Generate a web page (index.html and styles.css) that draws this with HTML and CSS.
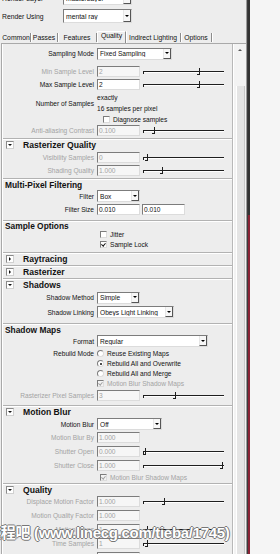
FILE: index.html
```html
<!DOCTYPE html>
<html>
<head>
<meta charset="UTF-8">
<link rel="stylesheet" href="styles.css">
</head>
<body>
<div class="window">
  <div class="panel">
    <div class="top">
      <div class="top-row">
        <span class="top-label">Render Layer</span>
        <div class="drop big" style="width:67px"><span>masterLayer</span><b></b></div>
      </div>
      <div class="top-row">
        <span class="top-label">Render Using</span>
        <div class="drop big" style="width:67px"><span>mental ray</span><b></b></div>
      </div>
    </div>

    <div class="tabs">
      <span class="tab" style="width:28px">Common</span>
      <span class="tab" style="width:26px">Passes</span>
      <span class="tab" style="width:38px">Features</span>
      <span class="tab on" style="width:27px">Quality</span>
      <span class="tab" style="width:54px">Indirect Lighting</span>
      <span class="tab" style="width:30px">Options</span>
    </div>

    <div class="frame">
      <div class="content">

        <!-- sampling (header scrolled away) -->
        <div class="sec first">
          <div class="row">
            <span class="lbl">Sampling Mode</span>
            <div class="drop" style="width:73px"><span>Fixed Sampling</span><b></b></div>
          </div>
          <div class="row gap5">
            <span class="lbl dis">Min Sample Level</span>
            <span class="field dis">2</span>
            <div class="slider"><i style="left:54px"></i></div>
          </div>
          <div class="row">
            <span class="lbl">Max Sample Level</span>
            <span class="field">2</span>
            <div class="slider"><i style="left:54px"></i></div>
          </div>
          <div class="multi">
            <span class="lbl">Number of Samples</span>
            <div class="lines">
              <div class="line">exactly</div>
              <div class="line">16 samples per pixel</div>
            </div>
          </div>
          <div class="opt diag"><span class="cb"></span>Diagnose samples</div>
          <div class="row">
            <span class="lbl dis">Anti-aliasing Contrast</span>
            <span class="field dis">0.100</span>
            <div class="slider"><i style="left:9px"></i></div>
          </div>
        </div>

        <div class="sec">
          <div class="hd"><span class="tog open"></span>Rasterizer Quality</div>
          <div class="row">
            <span class="lbl dis">Visibility Samples</span>
            <span class="field dis">0</span>
            <div class="slider"><i style="left:2px"></i></div>
          </div>
          <div class="row">
            <span class="lbl dis">Shading Quality</span>
            <span class="field dis">1.000</span>
            <div class="slider"><i style="left:17px"></i></div>
          </div>

          <div class="subsec">
            <div class="sub">Multi-Pixel Filtering</div>
            <div class="row">
              <span class="lbl">Filter</span>
              <div class="drop" style="width:41px"><span>Box</span><b></b></div>
            </div>
            <div class="row h14">
              <span class="lbl">Filter Size</span>
              <span class="field">0.010</span>
              <span class="field second">0.010</span>
            </div>
          </div>

          <div class="subsec">
            <div class="sub short">Sample Options</div>
            <div class="opt"><span class="cb"></span>Jitter</div>
            <div class="opt"><span class="cb on"></span>Sample Lock</div>
          </div>
        </div>

        <div class="sec"><div class="hd"><span class="tog"></span>Raytracing</div></div>
        <div class="sec"><div class="hd"><span class="tog"></span>Rasterizer</div></div>

        <div class="sec">
          <div class="hd"><span class="tog open"></span>Shadows</div>
          <div class="row h14">
            <span class="lbl">Shadow Method</span>
            <div class="drop" style="width:41px"><span>Simple</span><b></b></div>
          </div>
          <div class="row h15">
            <span class="lbl">Shadow Linking</span>
            <div class="drop" style="width:75px"><span>Obeys Light Linking</span><b></b></div>
          </div>

          <div class="subsec maps">
            <div class="sub">Shadow Maps</div>
            <div class="row">
              <span class="lbl">Format</span>
              <div class="drop" style="width:109px"><span>Regular</span><b></b></div>
            </div>
            <div class="radios">
              <span class="lbl">Rebuild Mode</span>
              <div class="lines">
                <div class="opt"><span class="rb"></span>Reuse Existing Maps</div>
                <div class="opt"><span class="rb on"></span>Rebuild All and Overwrite</div>
                <div class="opt"><span class="rb"></span>Rebuild All and Merge</div>
                <div class="opt dis"><span class="cb on off"></span>Motion Blur Shadow Maps</div>
              </div>
            </div>
            <div class="row">
              <span class="lbl dis">Rasterizer Pixel Samples</span>
              <span class="field dis">3</span>
              <div class="slider"><i style="left:30px"></i></div>
            </div>
          </div>
        </div>

        <div class="sec">
          <div class="hd"><span class="tog open"></span>Motion Blur</div>
          <div class="row">
            <span class="lbl">Motion Blur</span>
            <div class="drop" style="width:63px"><span>Off</span><b></b></div>
          </div>
          <div class="row h14">
            <span class="lbl dis">Motion Blur By</span>
            <span class="field dis">1.000</span>
          </div>
          <div class="row h14">
            <span class="lbl dis">Shutter Open</span>
            <span class="field dis">0.000</span>
            <div class="slider"><i style="left:0"></i></div>
          </div>
          <div class="row h14">
            <span class="lbl dis">Shutter Close</span>
            <span class="field dis">1.000</span>
            <div class="slider"><i style="left:77px"></i></div>
          </div>
          <div class="opt indent dis"><span class="cb on off"></span>Motion Blur Shadow Maps</div>

          <div class="subsec">
            <div class="hd small"><span class="tog open"></span>Quality</div>
            <div class="row">
              <span class="lbl dis">Displace Motion Factor</span>
              <span class="field dis">1.000</span>
              <div class="slider"><i style="left:19px"></i></div>
            </div>
            <div class="row h15">
              <span class="lbl dis">Motion Quality Factor</span>
              <span class="field dis">1.000</span>
            </div>
            <div class="row h14">
              <span class="lbl dis">Motion Steps</span>
              <span class="field dis">1</span>
              <div class="slider"><i style="left:2px"></i></div>
            </div>
            <div class="row h14">
              <span class="lbl dis">Time Samples</span>
              <span class="field dis">1</span>
              <div class="slider"><i style="left:2px"></i></div>
            </div>
            <div class="row h14">
              <span class="lbl dis">Time Contrast</span>
              <span class="field dis">0.200</span>
            </div>
          </div>
        </div>

      </div>
      <div class="scroll">
        <div class="arrow-up"></div>
        <div class="thumb"></div>
      </div>
    </div>
  </div>
  <div class="edge">
    <span class="e1"></span><span class="e2"></span><span class="e3"></span>
  </div>
  <div class="outside"></div>

  <div class="mark">教程吧 (www.linecg.com/tieba/1745)</div>
</div>
</body>
</html>
```

FILE: styles.css
```css
body {
    margin: 0;
    font-family: "Liberation Sans", Arial, sans-serif;
    font-size: 6.6px;
    color: #111;
    background: #f5f5f5;
}

.window {
    position: relative;
    display: flex;
    width: 280px;
    height: 554px;
    overflow: hidden;
}

.panel {
    width: 246px;
    flex: none;
    background: #ededed;
}

/* top: layer + renderer */
.top {
    display: flex;
    flex-direction: column;
    gap: 4px;
    margin-top: -9px;
    padding-left: 2px;
}
.top-row {
    display: flex;
    align-items: center;
    height: 14px;
    font-size: 6.8px;
}
.top-label {
    width: 61px;
}
.drop.big {
    height: 12px;
}

/* tabs */
.tabs {
    display: flex;
    height: 12px;
    margin-top: 8px;
    padding-left: 2px;
    font-size: 6.8px;
}
.tab {
    display: flex;
    align-items: center;
    justify-content: center;
    border-right: 1px solid #8c8c8c;
    box-shadow: 1px 0 0 #fff;
    margin-top: 2px;
    height: 9px;
}
.tab.on {
    margin-top: 0;
    height: 11px;
    border-left: 1px solid #fff;
    border-top: 1px solid #fff;
    align-items: flex-start;
}

/* frame */
.frame {
    display: flex;
    height: 511px;
    margin-left: 1px;
    border-top: 1px solid #a9a9a9;
    border-left: 1px solid #a9a9a9;
}
.content {
    width: 229px;
    flex: none;
    border-left: 1px solid #fff;
    border-right: 1px solid #b8b8b8;
}
.scroll {
    width: 13px;
    background: #f3f3f3;
    border-left: 1px solid #fff;
}
.arrow-up {
    height: 12px;
    position: relative;
}
.arrow-up::after {
    content: "";
    position: absolute;
    left: 4px;
    top: 5px;
    border-left: 2px solid transparent;
    border-right: 2px solid transparent;
    border-bottom: 2px solid #555;
}
.thumb {
    margin: 30px 1px 0 2px;
    height: 470px;
    background: #e4e4e4;
    border-left: 1px solid #fff;
    border-right: 1px solid #c8c8c8;
}

/* sections */
.sec {
    border-top: 1px solid #b2b2b2;
}
.sec.first {
    border-top: 0;
    padding-top: 3px;
    padding-bottom: 0.5px;
}
.hd {
    display: flex;
    align-items: center;
    height: 11px;
    border-top: 1px solid #fff;
    font-weight: bold;
    font-size: 8.6px;
}
.hd.small {
    height: 10px;
}
.tog {
    position: relative;
    width: 6px;
    height: 6px;
    margin: 0 9px 0 3px;
    background: #fff;
    border: 1px solid;
    border-color: #8a8a8a #d0d0d0 #d0d0d0 #8a8a8a;
}
.tog::after {
    content: "";
    position: absolute;
    left: 2px;
    top: 1px;
    border-top: 2px solid transparent;
    border-bottom: 2px solid transparent;
    border-left: 2px solid #111;
}
.tog.open::after {
    left: 1px;
    top: 2px;
    border-left: 2px solid transparent;
    border-right: 2px solid transparent;
    border-top: 2px solid #111;
    border-bottom: 0;
}
.subsec {
    margin-top: 1px;
    padding-bottom: 2px;
    border-top: 1px solid #b2b2b2;
}
.subsec.maps {
    margin-top: 3px;
    padding-bottom: 3px;
}
.sub {
    height: 10px;
    line-height: 10px;
    padding-left: 2px;
    border-top: 1px solid #fff;
    font-weight: bold;
    font-size: 8.4px;
}
.sub.short {
    height: 8px;
    line-height: 8px;
}

/* rows */
.row {
    display: flex;
    align-items: center;
    height: 13px;
}
.row.gap5 {
    margin-top: 5px;
}
.row.h14 {
    height: 14px;
}
.row.h15 {
    height: 15px;
}
.lbl {
    width: 94px;
    flex: none;
    padding-right: 3px;
    box-sizing: border-box;
    text-align: right;
}
.dis {
    color: #a3a3a3;
}

.field {
    width: 40px;
    height: 9px;
    line-height: 9px;
    padding-left: 1px;
    background: #fff;
    border: 1px solid;
    border-color: #7c7c7c #dcdcdc #dcdcdc #7c7c7c;
}
.field.dis {
    background: #f6f6f6;
}
.field.second {
    margin-left: 2px;
}

.drop {
    display: flex;
    align-items: center;
    height: 10px;
    background: #fff;
    border: 1px solid;
    border-color: #7c7c7c #dcdcdc #dcdcdc #7c7c7c;
}
.drop span {
    flex: 1;
    padding-left: 2px;
    white-space: nowrap;
    overflow: hidden;
}
.drop b {
    position: relative;
    width: 8px;
    height: 100%;
    box-sizing: border-box;
    border-left: 1px solid #e6e6e6;
    border-right: 1px solid #555;
    border-bottom: 1px solid #555;
    background: #f7f7f7;
}
.drop b::after {
    content: "";
    position: absolute;
    left: 1px;
    top: 50%;
    margin-top: -1px;
    border-left: 2px solid transparent;
    border-right: 2px solid transparent;
    border-top: 2px solid #000;
}

/* slider */
.slider {
    position: relative;
    width: 81px;
    height: 9px;
    margin-left: 3px;
}
.slider::before {
    content: "";
    position: absolute;
    left: 0;
    right: 0;
    top: 4px;
    height: 1px;
    background: #1e1e1e;
    box-shadow: 0 1px 0 #fff;
}
.slider::after {
    content: "";
    position: absolute;
    left: 0;
    top: 4px;
    width: 1px;
    height: 3px;
    background: #1e1e1e;
}
.slider i {
    position: absolute;
    top: 1px;
    width: 2px;
    height: 6px;
    border-right: 1px solid #1e1e1e;
    border-bottom: 1px solid #1e1e1e;
}

/* number of samples */
.multi, .radios {
    display: flex;
    align-items: center;
    margin-top: 2px;
}
.multi .line {
    height: 10.5px;
    line-height: 10.5px;
}
.opt.diag {
    padding-left: 100px;
}
.radios {
    margin-top: 1px;
    align-items: flex-start;
}
.radios .lbl {
    line-height: 10px;
}

/* checkboxes / radios */
.opt {
    display: flex;
    align-items: center;
    height: 10px;
    padding-left: 97px;
}
.lines .opt {
    padding-left: 0;
}
.opt.indent {
    padding-left: 97px;
    height: 9px;
}
.cb {
    position: relative;
    width: 5px;
    height: 5px;
    margin-right: 3px;
    background: #fff;
    border: 1px solid;
    border-color: #7c7c7c #dcdcdc #dcdcdc #7c7c7c;
}
.cb.on::after {
    content: "";
    position: absolute;
    left: 1px;
    top: 0;
    width: 1.5px;
    height: 3px;
    border-right: 1px solid #111;
    border-bottom: 1px solid #111;
    transform: rotate(40deg);
}
.cb.off {
    background: #f3f3f3;
}
.cb.off::after {
    border-color: #a3a3a3;
}
.rb {
    position: relative;
    width: 5px;
    height: 5px;
    margin-right: 3px;
    border-radius: 50%;
    background: #fff;
    border: 1px solid;
    border-color: #7c7c7c #dcdcdc #dcdcdc #7c7c7c;
}
.rb.on::after {
    content: "";
    position: absolute;
    left: 1.5px;
    top: 1.5px;
    width: 2px;
    height: 2px;
    border-radius: 50%;
    background: #111;
}

/* right edge of the window */
.edge {
    display: flex;
    width: 4px;
    flex: none;
}
.e1 {
    width: 1px;
    background: #9b9b9b;
}
.e2 {
    width: 1px;
    background: #3c3c3c;
}
.e3 {
    width: 2px;
    background: linear-gradient(#333 0, #333 215px, #8a2335 215px);
}
.outside {
    flex: 1;
    background: #f5f5f5;
}

/* site watermark over the picture */
.mark {
    position: absolute;
    left: -14px;
    top: 521px;
    font-family: "Liberation Sans", "Noto Sans CJK SC", sans-serif;
    font-size: 15px;
    font-weight: bold;
    color: #fff;
    letter-spacing: -0.3px;
    white-space: nowrap;
    text-shadow: 1px 0 0 #777, -1px 0 0 #777, 0 1px 0 #777, 0 -1px 0 #777;
}
```
